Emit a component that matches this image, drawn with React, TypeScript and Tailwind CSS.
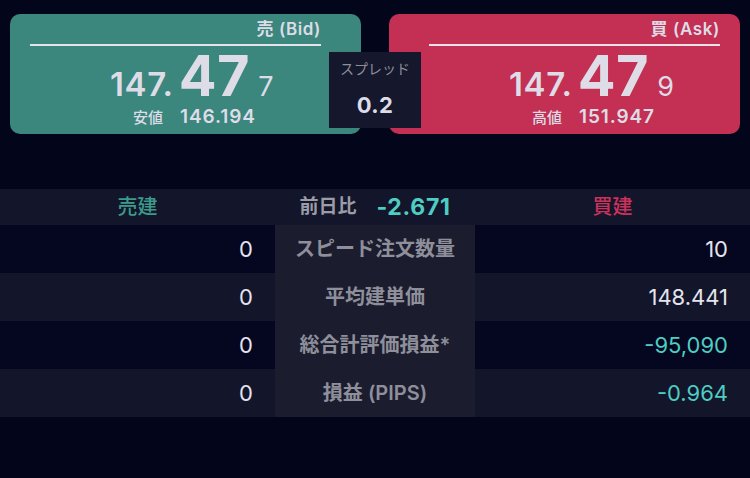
import React from "react";

const FONT = { fontFamily: 'Inter, "Noto Sans CJK JP", "Noto Sans", sans-serif' };

function PriceCard({
  side,
  label,
  small,
  lowLabel,
  lowValue,
}: {
  side: "bid" | "ask";
  label: string;
  small: string;
  lowLabel: string;
  lowValue: string;
}) {
  const bid = side === "bid";
  return (
    <div
      className={
        "flex h-[120px] w-[351px] flex-col rounded-[10px] text-[#dddce7] " +
        (bid ? "bg-[#3b877e] pl-[20px] pr-[40px]" : "bg-[#c33053] pl-[40px] pr-[20px]")
      }
    >
      <div className="mt-[5px] flex h-[20px] items-center justify-end text-[17px] font-semibold leading-[20px] tracking-[0.6px]">
        {label}
      </div>
      <div className="mt-[5px] h-[2px] bg-[#e4e3ec]" />
      <div className="mt-[7px] flex h-[46px] items-baseline pl-[80px]">
        <span className="text-[33px] font-semibold leading-[34px] tracking-[0.6px]">147.</span>
        <span className="ml-[5px] text-[56px] font-bold leading-[46px] tracking-[0.5px]">47</span>
        <span className="ml-[8px] text-[27px] font-normal leading-[28px]">{small}</span>
      </div>
      <div className="mt-[6px] flex h-[24px] items-baseline pl-[103px] leading-[24px]">
        <span className="text-[15px] font-medium">{lowLabel}</span>
        <span className="ml-[17px] text-[19px] font-semibold tracking-[0.9px]">{lowValue}</span>
      </div>
    </div>
  );
}

const rows = [
  { left: "0", label: "スピード注文数量", right: "10", neg: false, dark: true },
  { left: "0", label: "平均建単価", right: "148.441", neg: false, dark: false },
  { left: "0", label: "総合計評価損益*", right: "-95,090", neg: true, dark: true },
  { left: "0", label: "損益 (PIPS)", right: "-0.964", neg: true, dark: false },
];

export default function App() {
  return (
    <div className="min-h-[478px] w-[750px] bg-[#03051a]" style={FONT}>
      <div className="relative flex justify-between px-[10px] pt-[14px]">
        <PriceCard side="bid" label="売 (Bid)" small="7" lowLabel="安値" lowValue="146.194" />
        <PriceCard side="ask" label="買 (Ask)" small="9" lowLabel="高値" lowValue="151.947" />
        <div className="absolute left-[329px] top-[52px] flex h-[76px] w-[92px] flex-col items-center bg-[#15172d]">
          <div className="mt-[9px] text-[14px] leading-[16px] text-[#8d8e99]">スプレッド</div>
          <div className="mt-[15px] text-[22px] font-bold leading-[26px] tracking-[0.4px] text-[#dddce7]">0.2</div>
        </div>
      </div>

      <div className="mt-[55px] grid grid-cols-[275px_200px_275px]">
        <div className="flex h-[36px] items-center justify-center bg-[#13152a] text-[20px] font-medium text-[#3c9a8b]">
          売建
        </div>
        <div className="flex h-[36px] items-center justify-center bg-[#13152a]">
          <span className="text-[19px] font-semibold text-[#9c9ca7]">前日比</span>
          <span className="ml-[20px] text-[23px] font-bold tracking-[0.7px] text-[#4ecdc2]">-2.671</span>
        </div>
        <div className="flex h-[36px] items-center justify-center bg-[#13152a] text-[20px] font-medium text-[#c9325a]">
          買建
        </div>

        {rows.map((r, i) => (
          <React.Fragment key={i}>
            <div
              className={
                "flex h-[48px] items-center justify-end pr-[22px] text-[22px] font-normal text-[#e4e4ec] " +
                (r.dark ? "bg-[#05061f]" : "bg-[#13152a]")
              }
            >
              {r.left}
            </div>
            <div className="flex h-[48px] items-center justify-center bg-[#1b1c2e] text-[20px] font-semibold text-[#8e8f9a]">
              {r.label}
            </div>
            <div
              className={
                "flex h-[48px] items-center justify-end pr-[22px] text-[22px] font-normal " +
                (r.neg ? "text-[#4ecdc2] " : "text-[#e4e4ec] ") +
                (r.dark ? "bg-[#05061f]" : "bg-[#13152a]")
              }
            >
              {r.right}
            </div>
          </React.Fragment>
        ))}
      </div>
    </div>
  );
}
